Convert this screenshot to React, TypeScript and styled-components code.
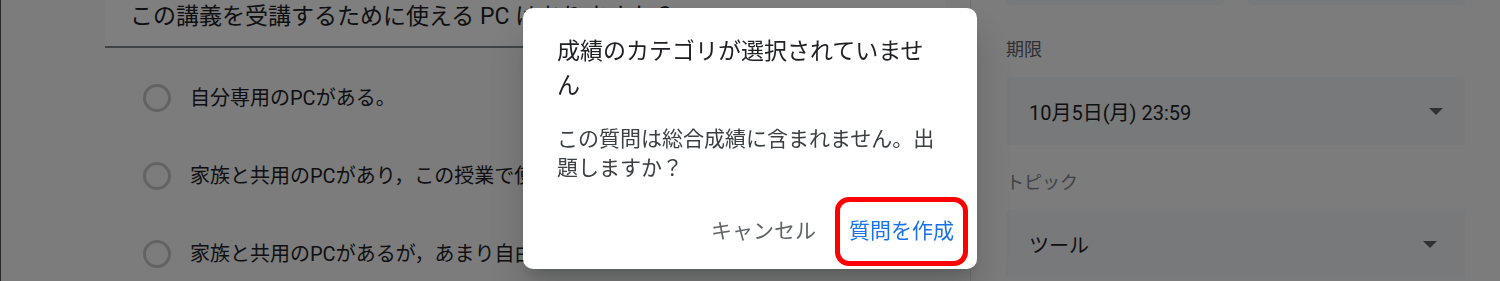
import React from "react";
import styled, { createGlobalStyle } from "styled-components";

const GlobalStyle = createGlobalStyle`
  html, body {
    margin: 0;
    padding: 0;
  }
  body {
    width: 1500px;
    height: 281px;
    overflow: hidden;
    font-family: Roboto, "Noto Sans CJK JP", sans-serif;
    background: #f8f9fa;
  }
`;

const Page = styled.div`
  display: flex;
  height: 281px;
  overflow: hidden;
  border-left: 1px solid #555;
  box-sizing: border-box;
  background: #f8f9fa;
`;

const Main = styled.div`
  width: 969px;
  flex: none;
  padding-left: 104px;
  box-sizing: border-box;
`;

const QuestionTitle = styled.div`
  width: 840px;
  padding: 0 25px 12px;
  box-sizing: border-box;
  background: #fff;
  border-bottom: 2px solid #80868b;
  font-size: 23px;
  line-height: 34px;
  color: #202124;
  white-space: nowrap;
`;

const Options = styled.div`
  margin-top: 11px;
`;

const OptionRow = styled.div`
  display: flex;
  align-items: center;
  height: 78px;
  padding-left: 38px;
`;

const Radio = styled.span`
  width: 28px;
  height: 28px;
  border: 3px solid #c6c7c9;
  border-radius: 50%;
  box-sizing: border-box;
  margin-right: 19px;
  flex: none;
`;

const OptionText = styled.span`
  font-size: 20px;
  line-height: 28px;
  color: #202124;
  white-space: nowrap;
`;

const Side = styled.aside`
  flex: 1;
  border-left: 1px solid #dadce0;
  padding: 0 35px;
`;

const TopRow = styled.div`
  display: grid;
  grid-template-columns: 1fr 1fr;
  gap: 24px;
  height: 68px;
  margin-top: -63px;
`;

const FieldBox = styled.div`
  background: #f1f3f4;
  border-radius: 4px;
`;

const Label = styled.div<{ $muted?: boolean; $gap: number }>`
  margin-top: ${(p) => p.$gap}px;
  font-size: 18px;
  line-height: 24px;
  color: ${(p) => (p.$muted ? "#80868b" : "#5f6368")};
`;

const Select = styled.div<{ $arrowGap: number; $height: number }>`
  margin-top: 15px;
  height: ${(p) => p.$height}px;
  display: flex;
  align-items: center;
  justify-content: space-between;
  padding: 0 ${(p) => p.$arrowGap}px 0 23px;
  background: #f1f3f4;
  border-radius: 4px 4px 0 0;
  font-size: 20px;
  color: #202124;
`;

const Arrow = styled.span`
  width: 0;
  height: 0;
  border-left: 7px solid transparent;
  border-right: 7px solid transparent;
  border-top: 7px solid #5f6368;
`;

const Scrim = styled.div`
  position: fixed;
  inset: 0;
  padding-bottom: 4px;
  background: rgba(0, 0, 0, 0.5);
  display: flex;
  align-items: center;
  justify-content: center;
`;

const Dialog = styled.div`
  width: 454px;
  box-sizing: border-box;
  padding: 27px 9px 3px 34px;
  background: #fff;
  border-radius: 10px;
  box-shadow: 0 11px 15px -7px rgba(0, 0, 0, 0.2), 0 24px 38px 3px rgba(0, 0, 0, 0.14);
`;

const DialogTitle = styled.h2`
  margin: 0;
  padding-right: 25px;
  font-size: 23px;
  font-weight: 400;
  line-height: 34px;
  color: #202124;
`;

const DialogBody = styled.p`
  margin: 22px 0 0;
  padding-right: 25px;
  font-size: 21px;
  line-height: 29px;
  color: #3c4043;
`;

const Actions = styled.div`
  margin-top: 14px;
  display: flex;
  justify-content: flex-end;
  align-items: center;
`;

const TextButton = styled.button<{ $primary?: boolean }>`
  border: none;
  background: none;
  padding: 0;
  font-family: inherit;
  font-size: 21px;
  line-height: 29px;
  color: ${(p) => (p.$primary ? "#1a73e8" : "#5f6368")};
  cursor: pointer;
`;

const Highlight = styled.div`
  margin-left: 19px;
  padding: 15px 9px;
  border: 5px solid #ff0000;
  border-radius: 14px;
  display: flex;
`;

const options = [
  "自分専用のPCがある。",
  "家族と共用のPCがあり，この授業で使うことができる。",
  "家族と共用のPCがあるが，あまり自由に使えない。",
];

export default function App() {
  return (
    <>
      <GlobalStyle />
      <Page>
        <Main>
          <QuestionTitle>この講義を受講するために使える PC はありますか？</QuestionTitle>
          <Options>
            {options.map((o) => (
              <OptionRow key={o}>
                <Radio />
                <OptionText>{o}</OptionText>
              </OptionRow>
            ))}
          </Options>
        </Main>
        <Side>
          <TopRow>
            <FieldBox />
            <FieldBox />
          </TopRow>
          <Label $gap={33}>期限</Label>
          <Select $arrowGap={22} $height={68}>
            <span>10月5日(月) 23:59</span>
            <Arrow />
          </Select>
          <Label $gap={26} $muted>トピック</Label>
          <Select $arrowGap={28} $height={68}>
            <span>ツール</span>
            <Arrow />
          </Select>
        </Side>
      </Page>
      <Scrim>
        <Dialog role="dialog">
          <DialogTitle>成績のカテゴリが選択されていません</DialogTitle>
          <DialogBody>この質問は総合成績に含まれません。出題しますか？</DialogBody>
          <Actions>
            <TextButton>キャンセル</TextButton>
            <Highlight>
              <TextButton $primary>質問を作成</TextButton>
            </Highlight>
          </Actions>
        </Dialog>
      </Scrim>
    </>
  );
}
